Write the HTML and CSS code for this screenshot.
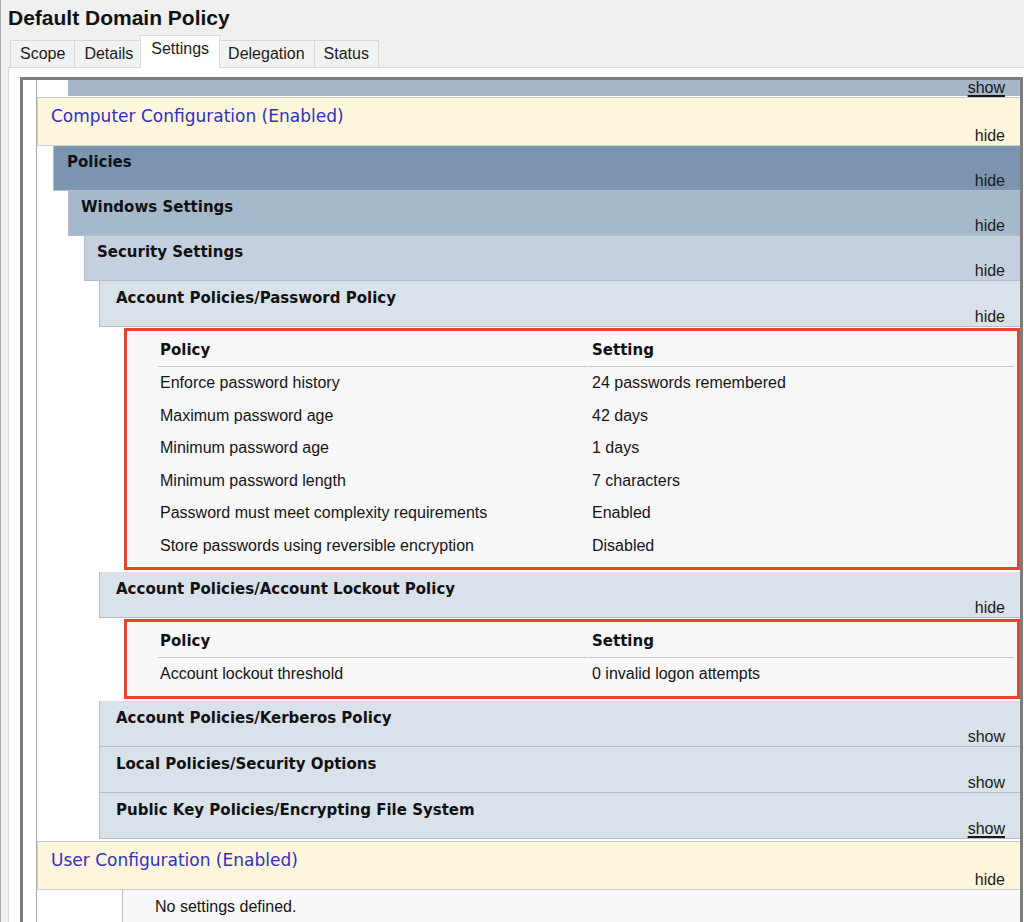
FILE: index.html
```html
<!DOCTYPE html>
<html lang="en">
<head>
<meta charset="utf-8">
<title>Default Domain Policy</title>
<link rel="stylesheet" href="styles.css">
</head>
<body>
<div class="window">
  <h1 class="title">Default Domain Policy</h1>
  <div class="tabs">
    <div class="tab">Scope</div>
    <div class="tab">Details</div>
    <div class="tab active">Settings</div>
    <div class="tab">Delegation</div>
    <div class="tab">Status</div>
  </div>
  <div class="panel">
    <div class="frame">
      <div class="report">
        <div class="prev"><span class="toggle-link">show</span></div>

        <section class="sec0">
          <div class="he he0">
            <div class="he-title">Computer Configuration (Enabled)</div>
            <div class="toggle">hide</div>
          </div>
          <div class="sec1">
            <div class="he he1">
              <div class="he-title">Policies</div>
              <div class="toggle">hide</div>
            </div>
            <div class="sec2">
              <div class="he he2">
                <div class="he-title">Windows Settings</div>
                <div class="toggle">hide</div>
              </div>
              <div class="sec3">
                <div class="he he3">
                  <div class="he-title">Security Settings</div>
                  <div class="toggle">hide</div>
                </div>
                <div class="sec4">
                  <div class="he he4">
                    <div class="he-title">Account Policies/Password Policy</div>
                    <div class="toggle">hide</div>
                  </div>
                  <div class="ptable">
                    <div class="pgrid">
                      <div class="ph">Policy</div><div class="ph c2">Setting</div>
                      <div class="pc">Enforce password history</div><div class="pc c2">24 passwords remembered</div>
                      <div class="pc">Maximum password age</div><div class="pc c2">42 days</div>
                      <div class="pc">Minimum password age</div><div class="pc c2">1 days</div>
                      <div class="pc">Minimum password length</div><div class="pc c2">7 characters</div>
                      <div class="pc">Password must meet complexity requirements</div><div class="pc c2">Enabled</div>
                      <div class="pc">Store passwords using reversible encryption</div><div class="pc c2">Disabled</div>
                    </div>
                  </div>
                  <div class="he he4">
                    <div class="he-title">Account Policies/Account Lockout Policy</div>
                    <div class="toggle">hide</div>
                  </div>
                  <div class="ptable">
                    <div class="pgrid">
                      <div class="ph">Policy</div><div class="ph c2">Setting</div>
                      <div class="pc">Account lockout threshold</div><div class="pc c2">0 invalid logon attempts</div>
                    </div>
                  </div>
                  <div class="he he4">
                    <div class="he-title">Account Policies/Kerberos Policy</div>
                    <div class="toggle">show</div>
                  </div>
                  <div class="he he4">
                    <div class="he-title">Local Policies/Security Options</div>
                    <div class="toggle">show</div>
                  </div>
                  <div class="he he4">
                    <div class="he-title">Public Key Policies/Encrypting File System</div>
                    <div class="toggle"><span class="toggle-link">show</span></div>
                  </div>
                </div>
              </div>
            </div>
          </div>
        </section>

        <section class="sec0 user">
          <div class="he he0">
            <div class="he-title">User Configuration (Enabled)</div>
            <div class="toggle">hide</div>
          </div>
          <div class="info">No settings defined.</div>
        </section>
      </div>
    </div>
  </div>
</div>
</body>
</html>
```

FILE: styles.css
```css
html, body {
  margin: 0;
  padding: 0;
}

body {
  width: 1024px;
  height: 922px;
  overflow: hidden;
  background: #f0f0f0;
  font-family: "Liberation Sans", Arial, sans-serif;
  color: #141414;
}

.window {
  height: 922px;
  border-left: 1px solid #a9a9a9;
  display: flex;
  flex-direction: column;
}

.title {
  margin: 0;
  height: 36px;
  line-height: 36px;
  padding-left: 7px;
  font-family: "Liberation Sans", Arial, sans-serif;
  font-weight: bold;
  font-size: 21px;
  color: #111;
}

.tabs {
  display: flex;
  align-items: flex-end;
  height: 31px;
  padding-left: 9px;
}

.tab {
  height: 27px;
  line-height: 26px;
  padding: 0 9px;
  border: 1px solid #d9d9d9;
  border-bottom: none;
  margin-right: -1px;
  background: #f2f2f2;
  font-size: 16px;
  color: #1a1a1a;
  box-sizing: border-box;
}

.tab.active {
  position: relative;
  z-index: 1;
  height: 33px;
  margin: 0 -2px -1px -2px;
  padding: 0 10px;
  background: #ffffff;
  line-height: 26px;
}

.panel {
  flex: 1;
  margin-left: 7px;
  border-top: 1px solid #d9d9d9;
  border-left: 1px solid #d9d9d9;
  background: #ffffff;
  padding: 9px 0 0 11px;
  overflow: hidden;
}

.frame {
  width: 1003px;
  height: 845px;
  box-sizing: border-box;
  border: 3px solid #7d7d7d;
  border-bottom: none;
  background: #ffffff;
  overflow: hidden;
}

.report {
  margin-left: 13px;
  border-left: 1px solid #a9a9a9;
  height: 100%;
}

.prev {
  margin-left: 31px;
  height: 16px;
  line-height: 16px;
  background: #a6b7ca;
  text-align: right;
  padding-right: 15px;
  font-size: 16px;
  margin-bottom: 1px;
}

.toggle-link {
  text-decoration: underline;
  text-decoration-thickness: 2px;
  text-underline-offset: 2px;
}

.sec1 { margin-left: 16px; }
.sec2 { margin-left: 15px; }
.sec3 { margin-left: 16px; }
.sec4 { margin-left: 15px; }

.he {
  border-left: 1px solid #b4bdc8;
  border-bottom: 1px solid #b4bdc8;
  padding: 6px 0 0 13px;
}

.he-title {
  font-family: "DejaVu Sans", Verdana, sans-serif;
  font-weight: bold;
  font-size: 15px;
  line-height: 20px;
  color: #111;
  white-space: nowrap;
}

.toggle {
  text-align: right;
  padding-right: 15px;
  font-size: 16px;
  line-height: 18px;
  color: #1a1a1a;
}

.he0 {
  background: #fdf6dc;
  border-top: 1px solid #c9c9c9;
  border-left-color: #cfcfcf;
  border-bottom-color: #cfcfcf;
  padding-top: 8px;
}

.he0 .he-title {
  font-weight: normal;
  font-size: 17px;
  line-height: 21px;
  color: #3030c2;
}

.he1 { background: #7b94b0; }
.he2 { background: #a6b8cb; padding-left: 12px; }
.he3 { background: #c4d0dd; padding-left: 12px; }
.he4 {
  background: #d9e1ea;
  padding-top: 7px;
  padding-left: 16px;
}

.ptable {
  margin: 1px 0 2px 25px;
  border: 3px solid #e9432b;
  background: #f8f8fb;
  padding: 0 3px 5px 31px;
}

.pgrid {
  display: grid;
  grid-template-columns: 430px 1fr;
  column-gap: 1px;
}

.ph {
  padding: 7px 0 4px 2px;
  line-height: 24px;
  border-bottom: 1px solid #c6c6c6;
  font-family: "DejaVu Sans", Verdana, sans-serif;
  font-weight: bold;
  font-size: 15px;
  color: #111;
}

.pc {
  height: 32.5px;
  line-height: 32.5px;
  padding-left: 2px;
  font-size: 16px;
  color: #141414;
  white-space: nowrap;
}

.c2 { padding-left: 3px; }

.user { margin-top: 2px; }

.info {
  margin-left: 85px;
  border-left: 1px solid #c0c0c0;
  background: #f8f8fb;
  padding: 6px 0 0 32px;
  line-height: 22px;
  height: 40px;
  font-size: 16px;
  color: #141414;
}
```
